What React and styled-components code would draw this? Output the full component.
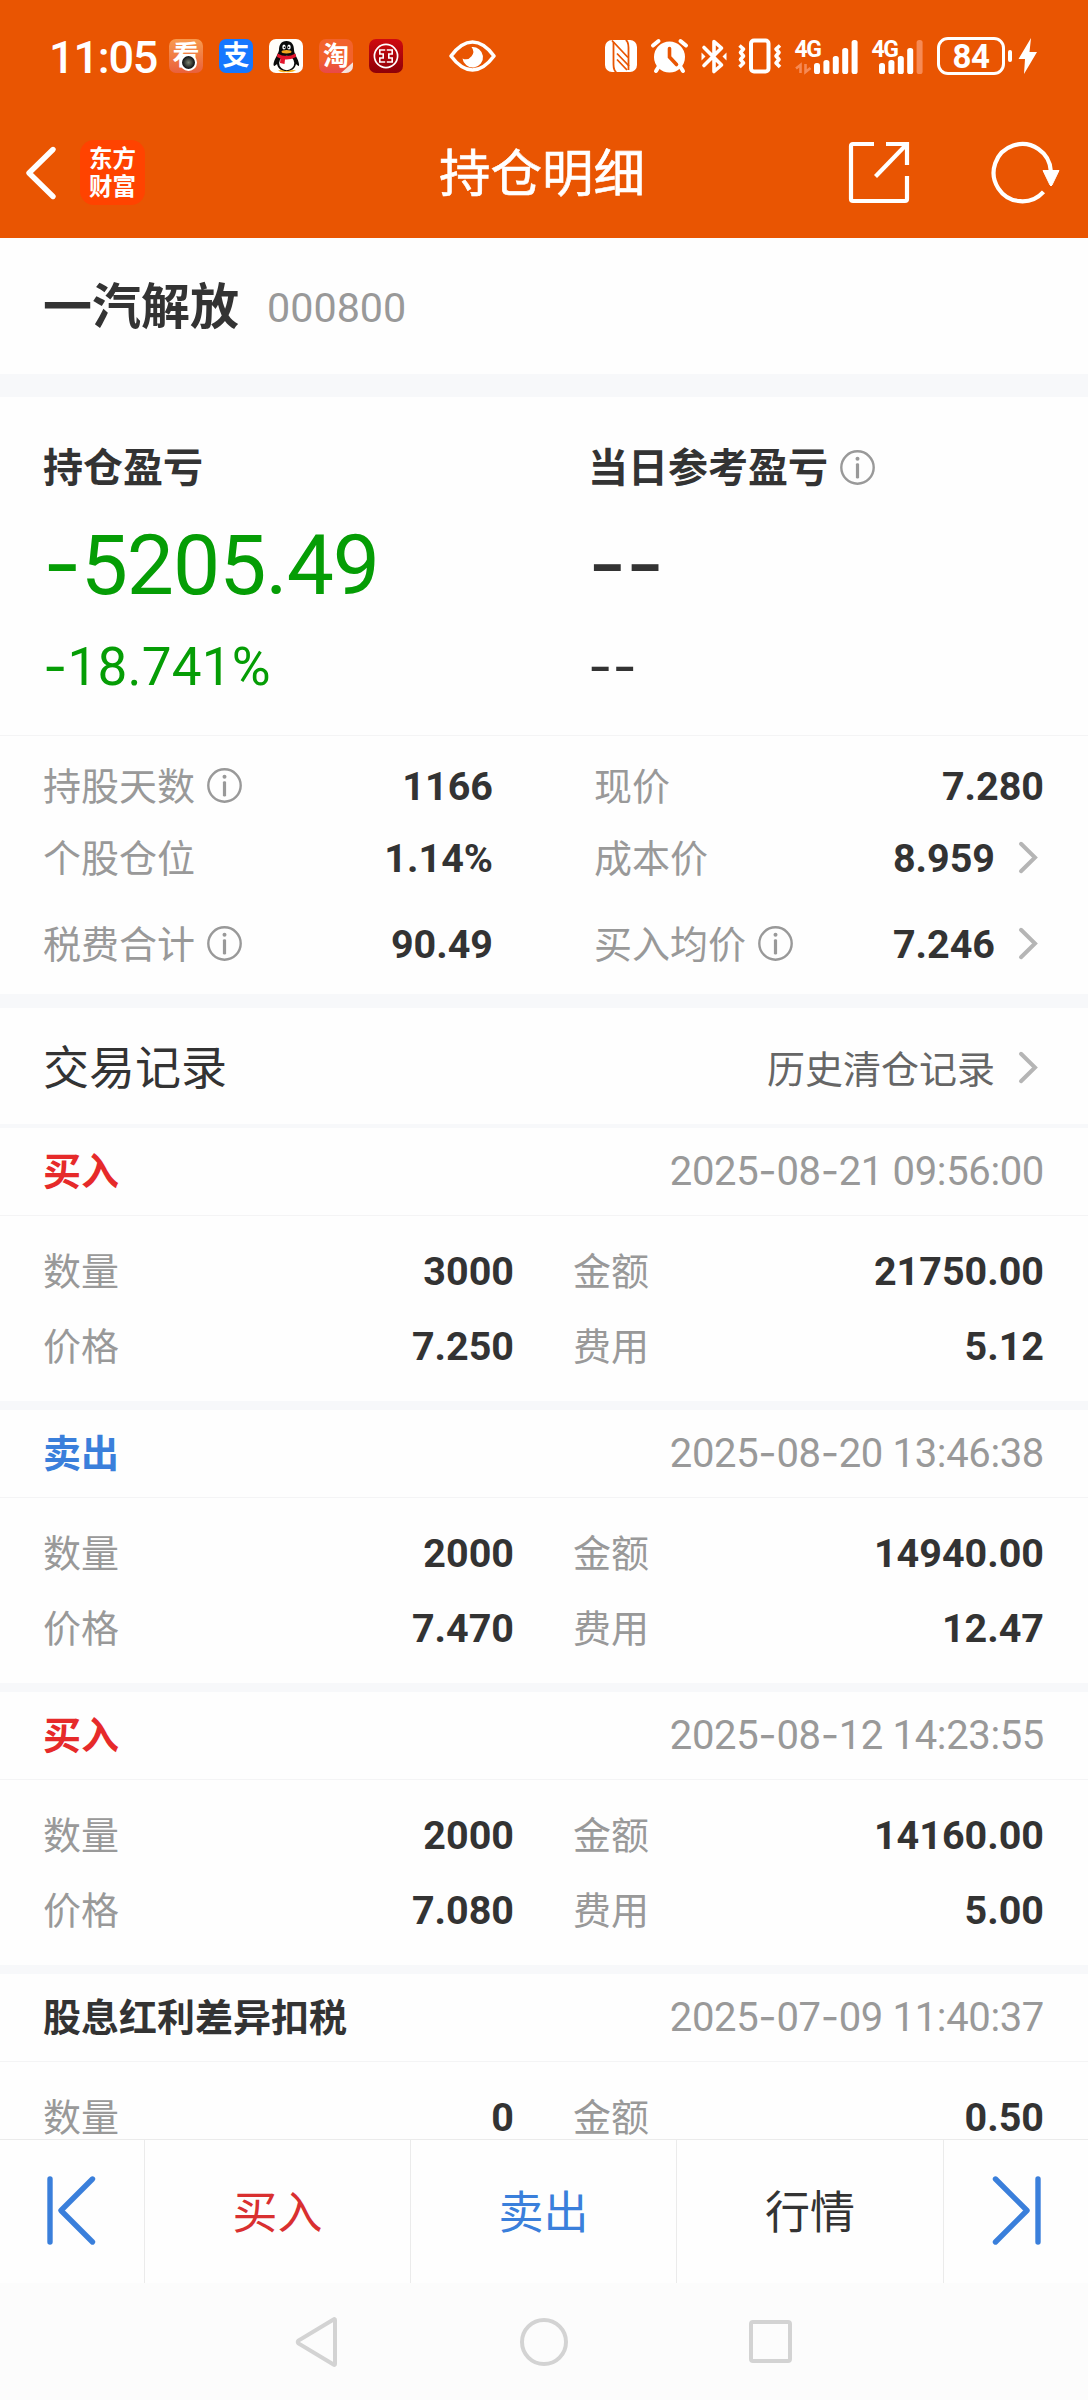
import React from "react";
import styled, { createGlobalStyle } from "styled-components";

const stats = [
  [
    { label: "持股天数", info: true, value: "1166" },
    { label: "现价", value: "7.280" },
  ],
  [
    { label: "个股仓位", value: "1.14%" },
    { label: "成本价", value: "8.959", link: true },
  ],
  [
    { label: "税费合计", info: true, value: "90.49" },
    { label: "买入均价", info: true, value: "7.246", link: true },
  ],
];

const records = [
  {
    type: "买入",
    color: "#e62a2a",
    time: "2025-08-21 09:56:00",
    count: "3000",
    amount: "21750.00",
    price: "7.250",
    fee: "5.12",
  },
  {
    type: "卖出",
    color: "#3a7fdb",
    time: "2025-08-20 13:46:38",
    count: "2000",
    amount: "14940.00",
    price: "7.470",
    fee: "12.47",
  },
  {
    type: "买入",
    color: "#e62a2a",
    time: "2025-08-12 14:23:55",
    count: "2000",
    amount: "14160.00",
    price: "7.080",
    fee: "5.00",
  },
  {
    type: "股息红利差异扣税",
    color: "#333333",
    time: "2025-07-09 11:40:37",
    count: "0",
    amount: "0.50",
  },
];

// Roboto has a very short hyphen, so dashes are set in Inter
function Digits({ children }) {
  return children
    .split(/(-)/)
    .filter(Boolean)
    .map((part, index) =>
      part === "-" ? <Dash key={index}>-</Dash> : part
    );
}

function InfoIcon() {
  return (
    <InfoSvg width="35" height="35" viewBox="0 0 35 35">
      <circle cx="17.5" cy="17.5" r="16.2" fill="none" stroke="#999" strokeWidth="2.4" />
      <circle cx="17.5" cy="8.7" r="2" fill="#999" />
      <rect x="15.9" y="13.2" width="3.2" height="15.4" rx="1.4" fill="#999" />
    </InfoSvg>
  );
}

function ArrowIcon() {
  return (
    <ArrowSvg width="20" height="33" viewBox="0 0 20 33">
      <path d="M3 2.8 L17 16.5 L3 30.2" fill="none" stroke="#b5b5b5" strokeWidth="4" strokeLinecap="round" />
    </ArrowSvg>
  );
}

function PenguinIcon() {
  return (
    <svg width="34" height="34" viewBox="0 0 34 34">
      <path d="M9 31.5 Q17 28.5 27 31.5 Q22 34 17 33 Q12 34 9 31.5Z" fill="#f5b428" />
      <path d="M17.5 2 C12 2 10 6 10 11 C9.5 15 5 20 4.5 25 C4.5 28 6 27 8 25 C9 30 13 32 17.5 32 C22 32 26 30 27 25 C29 27 30.5 28 30 25 C29.5 20 25 15 25 11 C25 6 23 2 17.5 2Z" fill="#0a0a0a" />
      <ellipse cx="17.7" cy="24" rx="7.6" ry="7.2" fill="#fff" />
      <ellipse cx="15" cy="8" rx="1.7" ry="2.6" fill="#fff" />
      <ellipse cx="20" cy="8" rx="1.7" ry="2.6" fill="#fff" />
      <circle cx="15.4" cy="8.4" r="0.8" fill="#000" />
      <circle cx="19.6" cy="8.4" r="0.8" fill="#000" />
      <ellipse cx="17.5" cy="12.8" rx="5" ry="1.7" fill="#f2a51f" />
      <path d="M8.5 14.5 Q17.5 19.5 26.5 14.5 L27 18 Q21 21 16 20.5 L15.5 25 L11 24 L11.5 19.5 L8 18Z" fill="#e3142c" />
    </svg>
  );
}

function BankIcon() {
  return (
    <svg width="34" height="34" viewBox="0 0 34 34" fill="none" stroke="#fff">
      <circle cx="17" cy="17" r="11.6" strokeWidth="1.7" />
      <path d="M16.2 11 H10.8 V15 H14.2 V19 H10.8 V23 H16.2 M17.8 11 H23.2 V15 H19.8 V19 H23.2 V23 H17.8" strokeWidth="1.6" />
    </svg>
  );
}

function EyeIcon() {
  return (
    <svg width="47" height="32" viewBox="0 0 47 32">
      <path d="M2 16 C9 6.5 16 2 23.5 2 C31 2 38 6.5 45 16 C38 25.5 31 30 23.5 30 C16 30 9 25.5 2 16Z" fill="none" stroke="#fff" strokeWidth="3.6" strokeLinejoin="round" />
      <path d="M22.5 7 A10.3 10.3 0 1 1 13.5 18.5 A7.5 7.5 0 0 0 22.5 7Z" fill="#fff" />
    </svg>
  );
}

function NfcIcon() {
  return (
    <svg width="32" height="34" viewBox="0 0 32 34">
      <rect x="0" y="1" width="32" height="32" rx="7" fill="#fff" />
      <path d="M8.5 3 V25.5 C8.5 30 10 33 11.5 33" fill="none" stroke="#e95502" strokeWidth="1.8" />
      <path d="M7 1.5 L23 18.5 M12 14.5 L24 27 M12 20.5 L22 31" fill="none" stroke="#e95502" strokeWidth="1.8" />
      <path d="M23.5 31 V8.5 C23.5 4 22 1 20.5 1" fill="none" stroke="#e95502" strokeWidth="1.8" />
    </svg>
  );
}

function AlarmIcon() {
  return (
    <svg width="37" height="34" viewBox="0 0 37 34">
      <circle cx="18.5" cy="18" r="15.5" fill="#fff" />
      <path d="M2 6.5 L7.5 2 M35 6.5 L29.5 2" stroke="#fff" strokeWidth="4" strokeLinecap="round" />
      <path d="M7.5 28 L5 32 M29.5 28 L32 32" stroke="#fff" strokeWidth="4" strokeLinecap="round" />
      <path d="M18.5 9.5 V18 L25.5 25.5" fill="none" stroke="#e95502" strokeWidth="3.6" strokeLinecap="round" />
    </svg>
  );
}

function BluetoothIcon() {
  return (
    <svg width="24" height="35" viewBox="0 0 24 35">
      <path d="M2 8.5 L19.5 26 L12 32.5 V2.5 L19.5 9 L2 26.5" fill="none" stroke="#fff" strokeWidth="3.6" strokeLinejoin="round" strokeLinecap="round" />
      <path d="M-0.5 13.5 L3.5 17.5 L-0.5 21.5Z M24.5 13.5 L20.5 17.5 L24.5 21.5Z" fill="#fff" />
    </svg>
  );
}

function VibrateIcon() {
  return (
    <svg width="41" height="36" viewBox="0 0 41 36" fill="none" stroke="#fff" strokeLinejoin="round">
      <rect x="11" y="2.5" width="17.5" height="31" rx="3" strokeWidth="4" />
      <path d="M-0.5 7.5 L3.5 11 L0.5 14.5 L3.5 18 L0.5 21.5 L3.5 25 L-0.5 29" strokeWidth="3.6" />
      <path d="M40 7.5 L36 11 L39 14.5 L36 18 L39 21.5 L36 25 L40 29" strokeWidth="3.6" />
    </svg>
  );
}

function SignalIcon({ width, start, weak }) {
  const heights = [11, 14, 18, 26, 34];
  return (
    <svg width={width} height="35" viewBox={`0 0 ${width} 35`}>
      <SignalText x="-0.5" y="18">
        4G
      </SignalText>
      {!weak && (
        <path d="M5.5 34 V26 L1 29.5 M10.5 25 V33 L15.5 29" fill="none" stroke="#f68a55" strokeWidth="2.6" />
      )}
      {heights.map((height, index) => (
        <rect
          key={height}
          x={start + index * 9.4}
          y={35 - height}
          width="6"
          height={height}
          rx="2.6"
          fill={weak && index === 4 ? "#f68a55" : "#fff"}
        />
      ))}
    </svg>
  );
}

function BoltIcon() {
  return (
    <svg width="19" height="36" viewBox="0 0 19 36">
      <path d="M13 0 L0.5 21 H7 L6 36 L19 14 H11.5Z" fill="#fff" />
    </svg>
  );
}

function BackIcon() {
  return (
    <svg width="32" height="54" viewBox="0 0 32 54">
      <path d="M29 3.5 L5 27 L29 50.5" fill="none" stroke="#fff" strokeWidth="5.4" strokeLinecap="round" strokeLinejoin="round" />
    </svg>
  );
}

function ShareIcon() {
  return (
    <svg width="60" height="61" viewBox="0 0 60 61" fill="none" stroke="#fff" strokeWidth="4.2">
      <path d="M25 2 H4 Q2 2 2 4 V57 Q2 59 4 59 H56 Q58 59 58 57 V34" />
      <path d="M37 2 H58 V23" />
      <path d="M57 3 L26.5 34.5" />
    </svg>
  );
}

function RefreshIcon() {
  return (
    <svg width="68" height="62" viewBox="0 0 68 62">
      <path d="M58.8 29 A28.6 28.6 0 1 0 51.5 49.8" fill="none" stroke="#fff" strokeWidth="4.2" />
      <path d="M51 28.5 H67 L60 43 Q59 45 58 43Z" fill="#fff" stroke="#fff" strokeLinejoin="round" />
    </svg>
  );
}

function JumpIcon({ flip }) {
  return (
    <JumpSvg width="50" height="70" viewBox="0 0 50 70" $flip={flip}>
      <path d="M3 3 V66" />
      <path d="M45.5 3 L14 34.5 L45.5 66" />
    </JumpSvg>
  );
}

function App() {
  return (
    <Page>
      <GlobalStyle />
      <StatusBar>
        <Time>11:05</Time>
        <AppIcons>
          <AppIcon $bg="linear-gradient(#f89a4e, #e9603c)">
            <AppGlyph $size={27}>看</AppGlyph>
            <Lens />
          </AppIcon>
          <AppIcon $bg="#1677ff">
            <AppGlyph $size={27}>支</AppGlyph>
          </AppIcon>
          <AppIcon $bg="#fffdfa">
            <PenguinIcon />
          </AppIcon>
          <AppIcon $bg="linear-gradient(#f2622c 60%, #e8484a)">
            <AppGlyph $size={26}>淘</AppGlyph>
            <Ribbon />
          </AppIcon>
          <AppIcon $bg="linear-gradient(#cf0a0f, #8e0008)">
            <BankIcon />
          </AppIcon>
        </AppIcons>
        <EyeIcon />
        <StatusIcons>
          <NfcIcon />
          <AlarmIcon />
          <BluetoothIcon />
          <VibrateIcon />
          <SignalIcon width={63} start={19} />
          <SignalIcon width={51} start={7} weak />
          <Power>
            <Battery>84</Battery>
            <BatteryTip />
            <BoltIcon />
          </Power>
        </StatusIcons>
      </StatusBar>

      <Header>
        <HeaderSide>
          <BackIcon />
          <Logo>
            <span>东方</span>
            <span>财富</span>
          </Logo>
        </HeaderSide>
        <Title>持仓明细</Title>
        <HeaderSide $right>
          <ShareIcon />
          <RefreshIcon />
        </HeaderSide>
      </Header>

      <Content>
        <Stock>
          <StockName>一汽解放</StockName>
          <StockCode>000800</StockCode>
        </Stock>
        <Band $height={23} />

        <Profit>
          <ProfitColumn $color="#059d05">
            <ProfitTitle>持仓盈亏</ProfitTitle>
            <ProfitAmount>
              <Digits>-5205.49</Digits>
            </ProfitAmount>
            <ProfitRate>
              <Digits>-18.741%</Digits>
            </ProfitRate>
          </ProfitColumn>
          <ProfitColumn $color="#333333">
            <ProfitTitle>
              当日参考盈亏
              <InfoIcon />
            </ProfitTitle>
            <ProfitAmount>
              <Digits>--</Digits>
            </ProfitAmount>
            <ProfitRate>
              <Digits>--</Digits>
            </ProfitRate>
          </ProfitColumn>
        </Profit>

        <Stats>
          {stats.map((row, index) => (
            <StatRow key={index}>
              {row.map((item) => (
                <Stat key={item.label}>
                  <Label>
                    {item.label}
                    {item.info && <InfoIcon />}
                  </Label>
                  <Value>{item.value}</Value>
                  {item.link && <ArrowIcon />}
                </Stat>
              ))}
            </StatRow>
          ))}
        </Stats>
        <Band $height={14} />

        <SectionHead>
          <SectionTitle>交易记录</SectionTitle>
          <HistoryLink>
            历史清仓记录
            <ArrowIcon />
          </HistoryLink>
        </SectionHead>
        <Band $height={4} />

        {records.map((record) => (
          <Record key={record.time}>
            <RecordHead>
              <RecordType $color={record.color}>{record.type}</RecordType>
              <RecordTime>
                <Digits>{record.time}</Digits>
              </RecordTime>
            </RecordHead>
            <RecordGrid>
              <Label>数量</Label>
              <Value>{record.count}</Value>
              <Label>金额</Label>
              <Value>{record.amount}</Value>
              {record.price && (
                <>
                  <Label>价格</Label>
                  <Value>{record.price}</Value>
                  <Label>费用</Label>
                  <Value>{record.fee}</Value>
                </>
              )}
            </RecordGrid>
            <Band $height={9} />
          </Record>
        ))}
      </Content>

      <ActionBar>
        <Action>
          <JumpIcon />
        </Action>
        <Action $color="#d93030">买入</Action>
        <Action $color="#3a7fdb">卖出</Action>
        <Action $color="#333333">行情</Action>
        <Action>
          <JumpIcon flip />
        </Action>
      </ActionBar>

      <NavBar>
        <svg width="48" height="52" viewBox="0 0 48 52">
          <path d="M41 4 V48 Q41 49.5 39.5 48.5 L4.5 27.5 Q3 26 4.5 24.5 L39.5 3.5 Q41 2.5 41 4Z" />
        </svg>
        <svg width="48" height="52" viewBox="0 0 48 52">
          <circle cx="24" cy="26" r="22" />
        </svg>
        <svg width="48" height="52" viewBox="0 0 48 52">
          <rect x="5" y="6" width="39" height="39" rx="2" />
        </svg>
      </NavBar>
    </Page>
  );
}

export default App;

const GlobalStyle = createGlobalStyle`
  * {
    box-sizing: border-box;
  }
  body {
    margin: 0;
    background: #fefefe;
    font-family: Roboto, "Noto Sans CJK SC", sans-serif;
    color: #333333;
  }
  svg {
    display: block;
    flex-shrink: 0;
    overflow: visible;
  }
`;

const Page = styled.div`
  width: 1088px;
  height: 2400px;
  display: flex;
  flex-direction: column;
  overflow: hidden;
`;

const StatusBar = styled.div`
  height: 112px;
  flex-shrink: 0;
  background: #e95502;
  color: white;
  display: flex;
  align-items: center;
  padding: 0 51px 0 49px;
`;

const Time = styled.div`
  width: 120px;
  font-size: 45px;
  font-weight: 500;
  line-height: 52px;
  letter-spacing: -1.2px;
  padding-top: 3px;
`;

const AppIcons = styled.div`
  display: flex;
  gap: 16px;
  margin-right: 46px;
`;

const AppIcon = styled.div`
  position: relative;
  width: 34px;
  height: 34px;
  border-radius: 7px;
  overflow: hidden;
  background: ${(props) => props.$bg};
  display: flex;
  align-items: center;
  justify-content: center;
`;

const AppGlyph = styled.span`
  font-size: ${(props) => props.$size}px;
  line-height: 34px;
  font-weight: 700;
`;

const Lens = styled.div`
  position: absolute;
  left: 11px;
  top: 15px;
  width: 17px;
  height: 17px;
  border-radius: 50%;
  border: 2px solid white;
  background: radial-gradient(#7d8471, #1b1d1c 60%);
`;

const Ribbon = styled.div`
  position: absolute;
  right: -8px;
  bottom: -1px;
  width: 24px;
  height: 7px;
  background: #f6e3dc;
  transform: rotate(-42deg);
`;

const StatusIcons = styled.div`
  margin-left: auto;
  display: flex;
  align-items: center;
  gap: 14px;
`;

const SignalText = styled.text`
  font-size: 23px;
  font-weight: 700;
  letter-spacing: -1.5px;
  fill: white;
`;

const Power = styled.div`
  display: flex;
  align-items: center;
`;

const Battery = styled.div`
  width: 68px;
  height: 38px;
  border: 3px solid white;
  border-radius: 11px;
  font-size: 33px;
  font-weight: 700;
  line-height: 34px;
  text-align: center;
  letter-spacing: -0.5px;
`;

const BatteryTip = styled.div`
  width: 4px;
  height: 12px;
  margin: 0 6px 0 3px;
  border-radius: 2px;
  background: white;
`;

const Header = styled.div`
  height: 126px;
  flex-shrink: 0;
  background: #e95502;
  color: white;
  display: flex;
  align-items: center;
  padding: 0 28px 5px 24px;
`;

const HeaderSide = styled.div`
  flex: 1;
  display: flex;
  align-items: center;
  justify-content: ${(props) => (props.$right ? "flex-end" : "flex-start")};
  gap: ${(props) => (props.$right ? "83px" : "24px")};
`;

const Logo = styled.div`
  width: 65px;
  height: 65px;
  border-radius: 14px;
  background: #ff4300;
  display: flex;
  flex-direction: column;
  align-items: center;
  justify-content: center;
  font-size: 23.5px;
  font-weight: 700;
  line-height: 28px;
`;

const Title = styled.div`
  padding-top: 5px;
  font-size: 51.5px;
  line-height: 60px;
  -webkit-text-stroke: 0.6px currentColor;
`;

const Content = styled.div`
  flex: 1;
  min-height: 0;
  overflow: hidden;
`;

const Stock = styled.div`
  height: 136px;
  display: flex;
  align-items: center;
  padding: 4px 44px 0 43px;
  line-height: 64px;
`;

const StockName = styled.div`
  font-size: 49px;
  font-weight: 700;
`;

const StockCode = styled.div`
  margin-left: 28px;
  font-size: 41.3px;
  color: #999999;
`;

const Band = styled.div`
  height: ${(props) => props.$height}px;
  background: #f7f8fa;
`;

const Profit = styled.div`
  height: 339px;
  padding: 42px 44px 0 43px;
  display: grid;
  grid-template-columns: 545px 1fr;
  border-bottom: 1px solid #f4f4f5;
`;

const ProfitColumn = styled.div`
  color: ${(props) => props.$color};
`;

const ProfitTitle = styled.div`
  display: flex;
  align-items: center;
  gap: 12px;
  font-size: 40px;
  font-weight: 700;
  line-height: 60px;
  color: #333333;
`;

const ProfitAmount = styled.div`
  margin-top: 17px;
  font-size: 84px;
  line-height: 100px;
  letter-spacing: -1px;
`;

const ProfitRate = styled.div`
  margin-top: 21px;
  font-size: 53px;
  line-height: 60px;
  letter-spacing: 0.2px;
`;

const Dash = styled.span`
  font-family: Inter, sans-serif;
  line-height: 0;
`;

const Stats = styled.div`
  padding: 15px 44px 13px 43px;
`;

const StatRow = styled.div`
  display: grid;
  grid-template-columns: 450px 450px;
  justify-content: space-between;

  &:last-child {
    margin-top: 14px;
  }
`;

const Stat = styled.div`
  display: flex;
  align-items: center;
  height: 72px;
`;

const Label = styled.div`
  display: flex;
  align-items: center;
  gap: 12px;
  font-size: 38px;
  line-height: 40px;
  color: #999999;
`;

const Value = styled.div`
  margin-left: auto;
  font-size: 39.5px;
  font-weight: 700;
  line-height: 40px;
  text-align: right;
`;

const InfoSvg = styled.svg`
  margin-top: -4px;
`;

const ArrowSvg = styled.svg`
  margin: -4px 6px 0 23px;
`;

const SectionHead = styled.div`
  height: 116px;
  display: flex;
  align-items: center;
  justify-content: space-between;
  padding: 3px 44px 0 43px;
`;

const SectionTitle = styled.div`
  font-size: 46px;
  line-height: 60px;
`;

const HistoryLink = styled.div`
  display: flex;
  align-items: center;
  font-size: 38px;
  line-height: 60px;
  padding-top: 4px;
  color: #666666;
`;

const Record = styled.div`
  height: 282px;
`;

const RecordHead = styled.div`
  height: 88px;
  padding: 1px 44px 0 43px;
  display: flex;
  align-items: center;
  justify-content: space-between;
  border-bottom: 1px solid #f4f4f5;
`;

const RecordType = styled.div`
  font-size: 38px;
  font-weight: 700;
  line-height: 60px;
  color: ${(props) => props.$color};
`;

const RecordTime = styled.div`
  font-size: 40px;
  line-height: 60px;
  letter-spacing: -0.35px;
  color: #999999;
`;

const RecordGrid = styled.div`
  height: 185px;
  padding: 18px 44px 0 43px;
  display: grid;
  grid-template-columns: 100px 371px 160px 1fr;
  grid-auto-rows: 75px;
  align-items: center;
  align-content: start;

  ${Label}:nth-child(4n + 3) {
    padding-left: 59px;
  }
`;

const ActionBar = styled.div`
  height: 144px;
  flex-shrink: 0;
  display: grid;
  grid-template-columns: 144px 266px 266px 267px 145px;
  border-top: 1px solid #ebebeb;
`;

const Action = styled.div`
  display: flex;
  align-items: center;
  justify-content: center;
  padding-bottom: 4px;
  font-size: 45px;
  color: ${(props) => props.$color || "#3a7fdb"};

  & + & {
    border-left: 1px solid #ebebeb;
  }
`;

const JumpSvg = styled.svg`
  fill: none;
  stroke: #3a7fdb;
  stroke-width: 5.4;
  stroke-linecap: round;
  stroke-linejoin: round;
  margin-top: 3px;
  transform: ${(props) => (props.$flip ? "scaleX(-1)" : "none")};
`;

const NavBar = styled.div`
  height: 117px;
  flex-shrink: 0;
  background: #fcfcfc;
  display: flex;
  align-items: center;
  justify-content: center;
  gap: 178px;

  svg {
    fill: none;
    stroke: #d3d3d3;
    stroke-width: 4;
  }
`;
